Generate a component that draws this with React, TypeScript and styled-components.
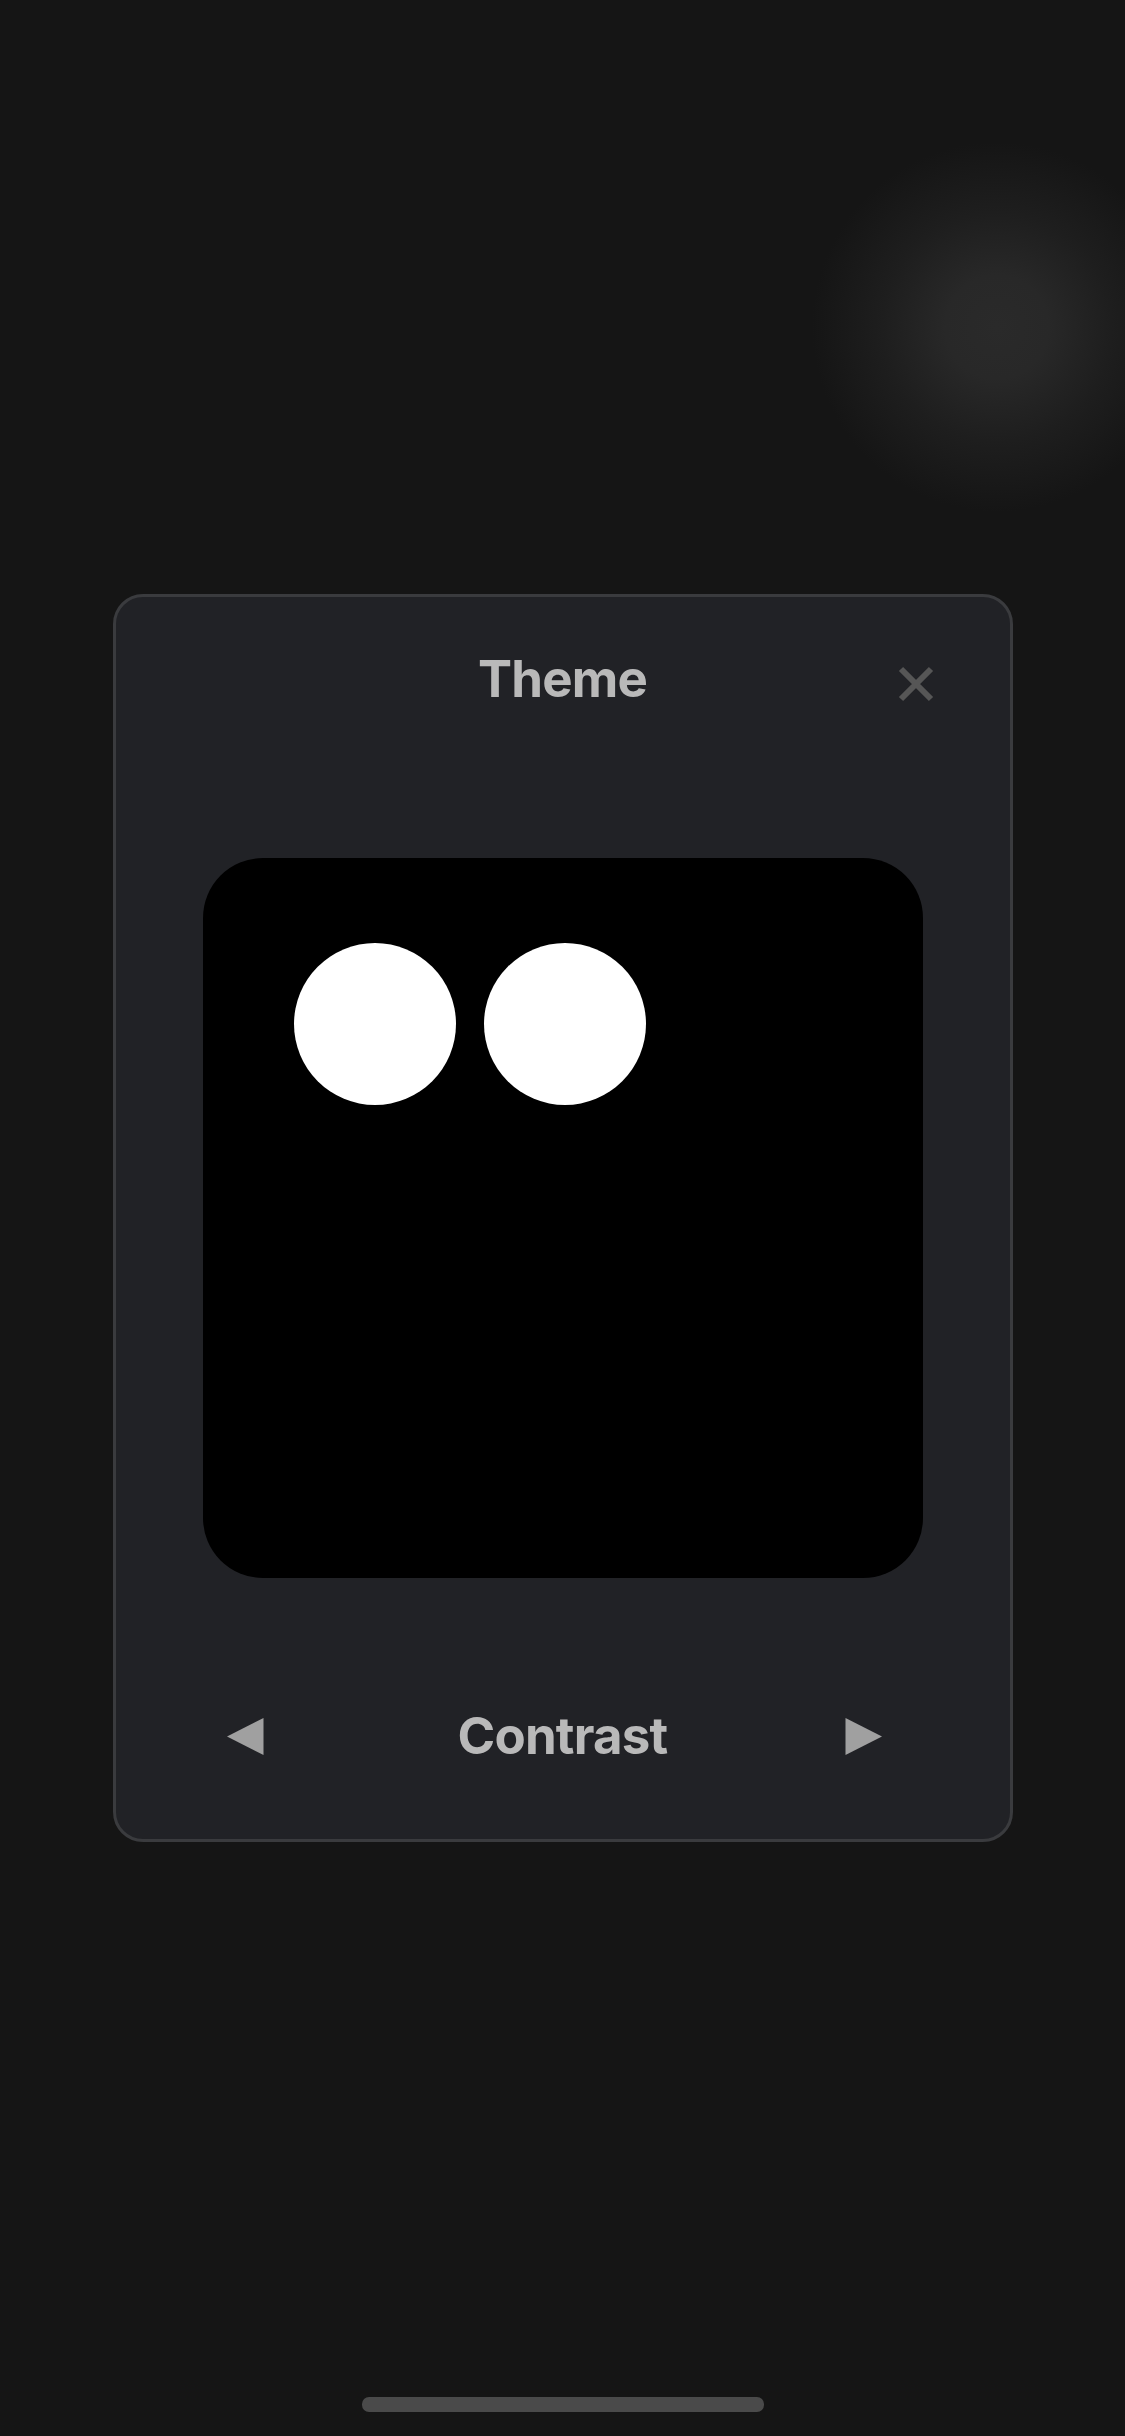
import React from "react";
import styled, { createGlobalStyle } from "styled-components";

const GlobalStyle = createGlobalStyle`
  html, body {
    margin: 0;
    padding: 0;
    background: #151515;
  }
  * {
    box-sizing: border-box;
  }
`;

const Screen = styled.div`
  position: relative;
  width: 1125px;
  height: 2436px;
  overflow: hidden;
  display: flex;
  align-items: center;
  justify-content: center;
  background: #151515;
  font-family: Inter, "Liberation Sans", sans-serif;
`;

const Glow = styled.div`
  position: absolute;
  left: 812px;
  top: 142px;
  width: 370px;
  height: 370px;
  background: radial-gradient(circle closest-side, #2a2a2a 0%, #282828 28%, #1e1e1e 62%, #151515 100%);
`;

const Card = styled.div`
  position: relative;
  width: 900px;
  height: 1248px;
  display: flex;
  flex-direction: column;
  align-items: stretch;
  background: #212226;
  border: 3px solid #3a3b3e;
  border-radius: 30px;
`;

const Header = styled.div`
  height: 162px;
  display: grid;
  grid-template-columns: 1fr auto 1fr;
  align-items: center;
`;

const Title = styled.h1`
  grid-column: 2;
  margin: 2px 0 0;
  font-size: 51px;
  line-height: 60px;
  font-weight: 700;
  letter-spacing: -0.8px;
  color: #b9b9b9;
`;

const CloseButton = styled.button`
  grid-column: 3;
  justify-self: end;
  width: 36px;
  height: 36px;
  margin: 12px 76px 0 0;
  padding: 0;
  border: 0;
  background: none;
  display: flex;
  cursor: pointer;
`;

const Preview = styled.div`
  width: 720px;
  height: 720px;
  margin: 99px auto 0;
  padding: 85px 0 0 91px;
  display: flex;
  align-items: flex-start;
  gap: 28px;
  background: #000000;
  border-radius: 60px;
`;

const Dot = styled.div`
  width: 162px;
  height: 162px;
  border-radius: 50%;
  background: #ffffff;
`;

const Footer = styled.div`
  height: 206px;
  margin-top: 55px;
  display: grid;
  grid-template-columns: 1fr auto 1fr;
  align-items: center;
`;

const ArrowButton = styled.button<{ $side: "left" | "right" }>`
  justify-self: ${(p) => (p.$side === "left" ? "start" : "end")};
  margin: ${(p) => (p.$side === "left" ? "0 0 0 111px" : "0 128px 0 0")};
  width: 37px;
  height: 37px;
  padding: 0;
  border: 0;
  background: none;
  display: flex;
  cursor: pointer;
`;

const Label = styled.div`
  font-size: 51px;
  line-height: 60px;
  font-weight: 700;
  letter-spacing: -0.8px;
  color: #b9b9b9;
`;

const HomeIndicator = styled.div`
  position: absolute;
  left: 362px;
  top: 2397px;
  width: 402px;
  height: 15px;
  border-radius: 7px;
  background: #4a4a4a;
`;

const App = () => {
  return (
    <>
      <GlobalStyle />
      <Screen>
        <Glow />
        <Card>
          <Header>
            <Title>Theme</Title>
            <CloseButton aria-label="Close">
              <svg width="36" height="36" viewBox="0 0 36 36">
                <path d="M3 3 L33 33 M33 3 L3 33" stroke="#565656" strokeWidth="6" fill="none" />
              </svg>
            </CloseButton>
          </Header>
          <Preview>
            <Dot />
            <Dot />
          </Preview>
          <Footer>
            <ArrowButton $side="left" aria-label="Previous">
              <svg width="37" height="37" viewBox="0 0 37 37">
                <path d="M0 18.5 L36.5 0 V37 Z" fill="#a0a0a0" />
              </svg>
            </ArrowButton>
            <Label>Contrast</Label>
            <ArrowButton $side="right" aria-label="Next">
              <svg width="37" height="37" viewBox="0 0 37 37">
                <path d="M37 18.5 L0.5 0 V37 Z" fill="#a0a0a0" />
              </svg>
            </ArrowButton>
          </Footer>
        </Card>
        <HomeIndicator />
      </Screen>
    </>
  );
};

export default App;
